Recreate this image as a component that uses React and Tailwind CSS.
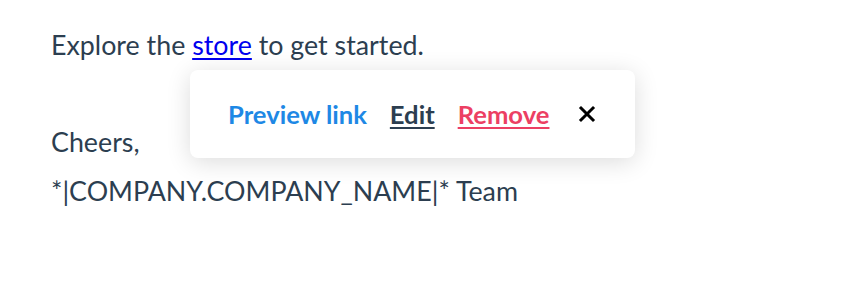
import React from "react";

export default function App() {
  return (
    <div className="relative h-[294px] w-[846px] bg-white font-['Lato',sans-serif] text-[#2c3e50]">
      <div className="px-[51px] pt-[21px] text-[26.8px] leading-[48.5px]">
        <p>
          Explore the{" "}
          <a href="#" className="text-[#0000ee] underline underline-offset-[3px]">
            store
          </a>{" "}
          to get started.
        </p>
        <p>&nbsp;</p>
        <p>Cheers,</p>
        <p>*|COMPANY.COMPANY_NAME|* Team</p>
      </div>

      {/* link toolbar */}
      <div className="absolute left-[190px] top-[70px] flex h-[88px] w-[445px] items-center gap-[23px] rounded-[8px] bg-white pl-[38px] text-[25.6px] font-bold shadow-[0_4px_24px_rgba(0,0,0,0.14)]">
        <button type="button" className="text-[#1e88e5]">
          Preview link
        </button>
        <button type="button" className="underline decoration-2 underline-offset-[3px]">
          Edit
        </button>
        <button type="button" className="text-[#ec3f63] underline decoration-2 underline-offset-[3px]">
          Remove
        </button>
        <button type="button" className="ml-[6px] text-black" aria-label="Close">
          <svg width="18" height="18" viewBox="0 0 18 18" stroke="currentColor" strokeWidth="3" strokeLinecap="square">
            <path d="M3 3l12 12M15 3L3 15" />
          </svg>
        </button>
      </div>
    </div>
  );
}
